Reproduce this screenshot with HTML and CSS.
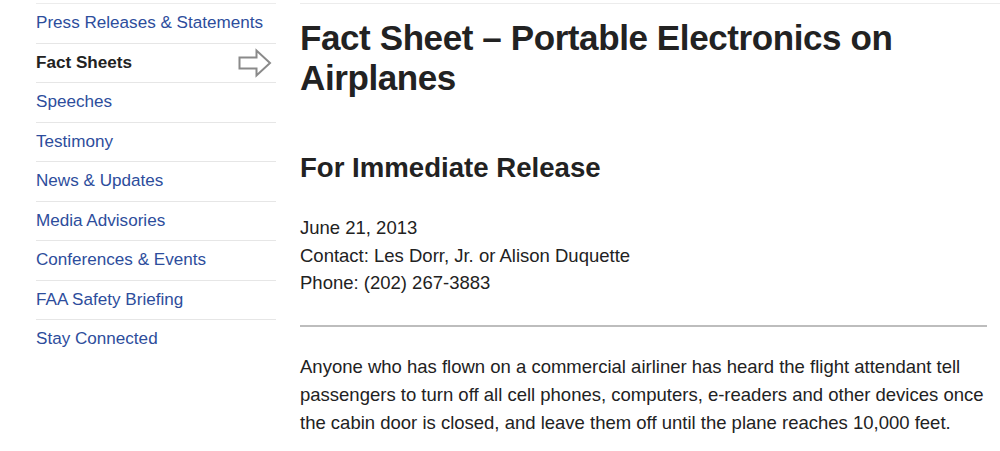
FILE: index.html
```html
<!DOCTYPE html>
<html lang="en">
<head>
<meta charset="utf-8">
<title>Fact Sheet – Portable Electronics on Airplanes</title>
<link rel="stylesheet" href="styles.css">
</head>
<body>
<div class="page">
  <nav class="sidenav">
    <ul class="navlist">
      <li class="navitem"><a class="navlink" href="#">Press Releases &amp; Statements</a></li>
      <li class="navitem current"><span class="navlink">Fact Sheets</span>
        <svg class="arrow" width="34" height="30" viewBox="0 0 34 30"><path d="M1.5 9.5 H18.5 V2.5 L32 15 L18.5 27.5 V20.5 H1.5 Z" fill="none" stroke="#8a8a8a" stroke-width="2" stroke-linejoin="miter"/></svg>
      </li>
      <li class="navitem"><a class="navlink" href="#">Speeches</a></li>
      <li class="navitem"><a class="navlink" href="#">Testimony</a></li>
      <li class="navitem"><a class="navlink" href="#">News &amp; Updates</a></li>
      <li class="navitem"><a class="navlink" href="#">Media Advisories</a></li>
      <li class="navitem"><a class="navlink" href="#">Conferences &amp; Events</a></li>
      <li class="navitem"><a class="navlink" href="#">FAA Safety Briefing</a></li>
      <li class="navitem last"><a class="navlink" href="#">Stay Connected</a></li>
    </ul>
  </nav>
  <main class="content">
    <h1 class="title">Fact Sheet – Portable Electronics on Airplanes</h1>
    <h2 class="subtitle">For Immediate Release</h2>
    <p class="meta">June 21, 2013<br>Contact: Les Dorr, Jr. or Alison Duquette<br>Phone: (202) 267-3883</p>
    <hr class="rule">
    <p class="body">Anyone who has flown on a commercial airliner has heard the flight attendant tell passengers to turn off all cell phones, computers, e-readers and other devices once the cabin door is closed, and leave them off until the plane reaches 10,000 feet.</p>
  </main>
</div>
</body>
</html>
```
FILE: styles.css
```css
html, body {
  margin: 0;
  padding: 0;
  background: #ffffff;
}
body {
  font-family: "Liberation Sans", Arial, Helvetica, sans-serif;
  color: #222222;
  overflow: hidden;
}
.page {
  display: flex;
  align-items: flex-start;
  padding-top: 3px;
}
.sidenav {
  width: 240px;
  margin-left: 36px;
  flex: none;
}
.navlist {
  list-style: none;
  margin: 0;
  padding: 0;
  border-top: 1px solid #ececec;
}
.navitem {
  height: 38.5px;
  display: flex;
  align-items: center;
  justify-content: space-between;
  border-bottom: 1px solid #e6e6e6;
  padding-right: 4px;
}
.navitem.last {
  border-bottom: none;
}
.navlink {
  font-size: 17.1px;
  color: #2d4d9c;
  text-decoration: none;
}
.current .navlink {
  color: #222222;
  font-weight: bold;
}
.arrow {
  display: block;
}
.content {
  margin-left: 24px;
  width: 700px;
  border-top: 1px solid #ececec;
}
.title {
  font-size: 35px;
  line-height: 40px;
  font-weight: bold;
  margin: 14px 0 0 0;
  letter-spacing: -0.4px;
}
.subtitle {
  font-size: 27.6px;
  line-height: 32px;
  font-weight: bold;
  margin: 54px 0 0 0;
}
.meta {
  font-size: 18.5px;
  line-height: 27.5px;
  margin: 30px 0 0 0;
}
.rule {
  border: none;
  border-top: 2px solid #bdbdbd;
  width: 687px;
  margin: 28px 0 0 0;
}
.body {
  font-size: 18.5px;
  line-height: 28px;
  margin: 26px 0 0 0;
}
```
